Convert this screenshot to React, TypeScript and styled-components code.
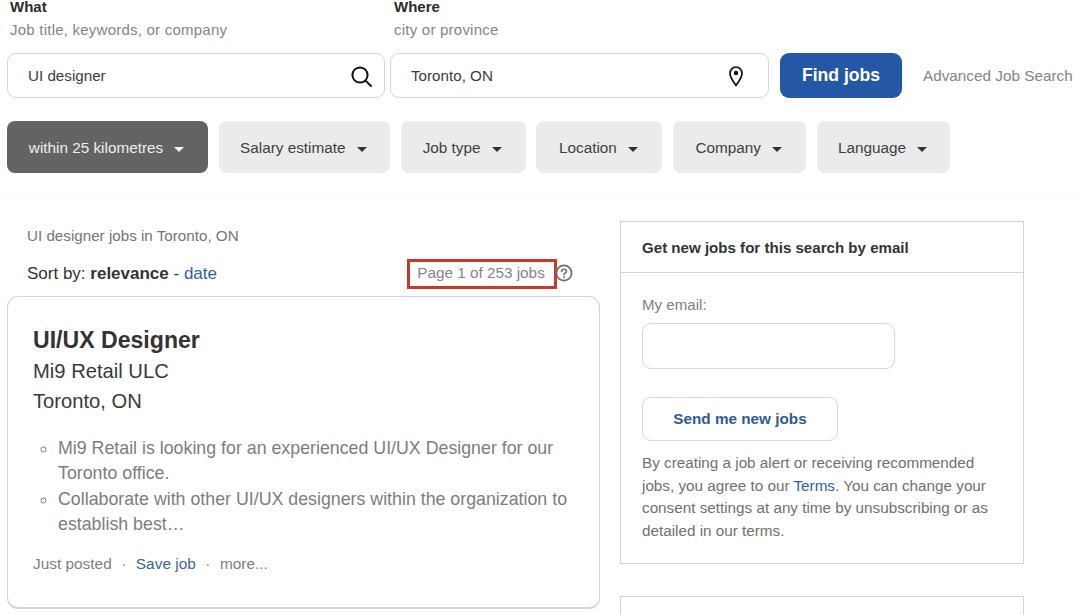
import React from "react";
import styled, { createGlobalStyle } from "styled-components";

const Global = createGlobalStyle`
  html, body { margin: 0; padding: 0; background: #fff; height: 615px; overflow: hidden; }
  body { font-family: "Liberation Sans", Arial, sans-serif; color: #2d2d2d; }
  * { box-sizing: border-box; }
`;

const Page = styled.div`
  width: 1080px;
  height: 615px;
  overflow: hidden;
  display: flex;
  flex-direction: column;
`;

const SearchForm = styled.div`
  display: grid;
  grid-template-columns: 378px 379px 122px auto;
  column-gap: 5px;
  padding-left: 7px;
  height: 98px;
  grid-template-rows: 53px 45px;
`;

const FieldHead = styled.div<{ $shift?: number }>`
  padding-left: ${(p) => 3 + (p.$shift ?? 0)}px;
`;

const FieldTitle = styled.div`
  font-size: 15px;
  font-weight: 700;
  line-height: 14px;
  color: #2b2b2b;
`;

const FieldHint = styled.div`
  font-size: 15px;
  line-height: 18px;
  margin-top: 7px;
  color: #858585;
  letter-spacing: 0.23px;
`;

const Field = styled.div`
  border: 1px solid #d6d6d8;
  border-radius: 9px;
  background: #fff;
  display: flex;
  align-items: center;
  justify-content: space-between;
  padding: 0 11px 0 20px;
  font-size: 15.2px;
  color: #3c3c3c;
`;

const FindButton = styled.div`
  margin-left: 6px;
  width: 122px;
  background: #2458a6;
  border-radius: 9px;
  color: #fff;
  font-weight: 700;
  font-size: 17.6px;
  display: flex;
  align-items: center;
  justify-content: center;
`;

const Advanced = styled.div`
  margin-left: 22px;
  font-size: 15.3px;
  color: #858585;
  display: flex;
  align-items: center;
  white-space: nowrap;
`;

const FilterRow = styled.div`
  display: flex;
  gap: 10.8px;
  margin-top: 23px;
  padding: 0 0 22px 7px;
  border-bottom: 1px solid #f8f8f8;
`;

const Filter = styled.div<{ $active?: boolean; $w: number }>`
  width: ${(p) => p.$w}px;
  height: 52px;
  padding: 1px 2px 0 0;
  border-radius: 8px;
  display: flex;
  align-items: center;
  justify-content: center;
  gap: 11px;
  font-size: 15.3px;
  background: ${(p) => (p.$active ? "#636363" : "#ebebeb")};
  color: ${(p) => (p.$active ? "#efefef" : "#404040")};
`;

const Caret = styled.span<{ $light?: boolean }>`
  width: 0;
  height: 0;
  margin-top: 3px;
  border-left: 5px solid transparent;
  border-right: 5px solid transparent;
  border-top: 5px solid ${(p) => (p.$light ? "#f4f4f4" : "#333")};
`;

const Columns = styled.div`
  display: flex;
  align-items: flex-start;
  padding-left: 7px;
`;

const Left = styled.div`
  width: 593px;
  padding-top: 31px;
`;

const ResultsTitle = styled.div`
  padding-left: 20px;
  font-size: 15.2px;
  line-height: 18px;
  color: #757575;
`;

const SortRow = styled.div`
  height: 24px;
  margin-top: 17px;
  padding-left: 20px;
  font-size: 17px;
  line-height: 24px;
  color: #333;
  display: flex;
  justify-content: space-between;
`;

const SortLink = styled.span`
  color: #2e5f9e;
`;

const PageCount = styled.div`
  display: flex;
  align-items: center;
  margin-right: 27px;
  margin-top: -1px;
`;

const PageBox = styled.div`
  width: 150px;
  height: 30px;
  padding: 0 2px 1px 0;
  border: 3px solid #c53a2c;
  display: flex;
  align-items: center;
  justify-content: center;
  font-size: 15.3px;
  color: #858585;
`;

const HelpIcon = styled.svg`
  margin-left: -2px;
  margin-top: -1px;
`;

const Card = styled.div`
  margin-top: 10px;
  height: 313px;
  border: 1px solid #d4d4d4;
  border-bottom-width: 2px;
  border-radius: 11px;
  padding: 28px 26px 0 25px;
`;

const JobTitle = styled.div`
  font-size: 23.1px;
  line-height: 31px;
  font-weight: 700;
  color: #333;
`;

const JobLine = styled.div`
  font-size: 20.2px;
  line-height: 30px;
  color: #3a3a3a;
`;

const Snippet = styled.ul`
  margin: 20px 0 0;
  padding: 0 0 0 25px;
  font-size: 17.8px;
  line-height: 25.4px;
  color: #7d7d7d;
  list-style: circle;
`;

const Meta = styled.div`
  margin-top: 14px;
  display: flex;
  gap: 9.5px;
  font-size: 15.4px;
  line-height: 24px;
  color: #808080;
`;

const MetaLink = styled.span`
  color: #3f6594;
`;

const Right = styled.div`
  margin-left: 20px;
  width: 404px;
  padding-top: 25px;
`;

const AlertBox = styled.div`
  border: 1px solid #d4d4d4;
  height: 343px;
`;

const AlertHead = styled.div`
  height: 51px;
  border-bottom: 1px solid #d4d4d4;
  display: flex;
  align-items: center;
  padding-left: 21px;
  font-size: 15.1px;
  font-weight: 700;
  color: #333;
`;

const AlertBody = styled.div`
  padding: 23px 21px 0;
`;

const EmailLabel = styled.div`
  font-size: 15.1px;
  line-height: 18px;
  color: #808080;
`;

const EmailInput = styled.div`
  width: 253px;
  height: 46px;
  margin-top: 9px;
  border: 1px solid #d6d6d8;
  border-radius: 9px;
`;

const SendButton = styled.div`
  width: 196px;
  height: 44px;
  margin-top: 28px;
  border: 1px solid #d6d6d8;
  border-radius: 9px;
  display: flex;
  align-items: center;
  justify-content: center;
  font-size: 15.3px;
  font-weight: 700;
  color: #2f5b94;
`;

const Legal = styled.div`
  margin-top: 11px;
  font-size: 15.25px;
  line-height: 22.6px;
  color: #707070;
  width: 360px;
`;

const TermsLink = styled.span`
  color: #2e5f9e;
`;

const NextBox = styled.div`
  margin-top: 32px;
  height: 60px;
  border: 1px solid #d4d4d4;
`;

const PinIcon = styled.svg`
  margin-right: 11px;
`;

const filters = [
  { label: "Salary estimate", w: 171 },
  { label: "Job type", w: 125 },
  { label: "Location", w: 126 },
  { label: "Company", w: 133 },
  { label: "Language", w: 133 },
];

export default function App() {
  return (
    <Page>
      <Global />
      <SearchForm>
        <FieldHead>
          <FieldTitle>What</FieldTitle>
          <FieldHint>Job title, keywords, or company</FieldHint>
        </FieldHead>
        <FieldHead $shift={1}>
          <FieldTitle>Where</FieldTitle>
          <FieldHint>city or province</FieldHint>
        </FieldHead>
        <div />
        <div />
        <Field>
          UI designer
          <svg width="24" height="24" viewBox="0 0 24 24" fill="none" stroke="#111" strokeWidth="2">
            <circle cx="11" cy="11" r="7.6" />
            <path d="M16.6 16.6 L22 22" strokeLinecap="round" />
          </svg>
        </Field>
        <Field>
          Toronto, ON
          <PinIcon width="20" height="22" viewBox="0 0 20 22" fill="none">
            <path
              d="M10 20.5 C7 16 4 12.5 4 8.5 A6 6.5 0 0 1 16 8.5 C16 12.5 13 16 10 20.5 Z"
              stroke="#111"
              strokeWidth="1.7"
              strokeLinejoin="round"
            />
            <circle cx="10" cy="8" r="2.2" fill="#111" />
          </PinIcon>
        </Field>
        <FindButton>Find jobs</FindButton>
        <Advanced>Advanced Job Search</Advanced>
      </SearchForm>

      <FilterRow>
        <Filter $active $w={201}>
          within 25 kilometres
          <Caret $light />
        </Filter>
        {filters.map((f) => (
          <Filter key={f.label} $w={f.w}>
            {f.label}
            <Caret />
          </Filter>
        ))}
      </FilterRow>

      <Columns>
        <Left>
          <ResultsTitle>UI designer jobs in Toronto, ON</ResultsTitle>
          <SortRow>
            <span>
              Sort by: <b>relevance</b> - <SortLink>date</SortLink>
            </span>
            <PageCount>
              <PageBox>Page 1 of 253 jobs</PageBox>
              <HelpIcon width="18" height="18" viewBox="0 0 18 18" fill="none">
                <circle cx="9" cy="9" r="7.6" stroke="#707070" strokeWidth="1.8" />
                <path
                  d="M6.6 7.2 C6.6 4.6 11.4 4.6 11.4 7.2 C11.4 8.9 9 8.9 9 10.8"
                  stroke="#707070"
                  strokeWidth="1.7"
                  strokeLinecap="round"
                />
                <circle cx="9" cy="13.2" r="1" fill="#707070" />
              </HelpIcon>
            </PageCount>
          </SortRow>
          <Card>
            <JobTitle>UI/UX Designer</JobTitle>
            <JobLine>Mi9 Retail ULC</JobLine>
            <JobLine>Toronto, ON</JobLine>
            <Snippet>
              <li>Mi9 Retail is looking for an experienced UI/UX Designer for our Toronto office.</li>
              <li>Collaborate with other UI/UX designers within the organization to establish best…</li>
            </Snippet>
            <Meta>
              <span>Just posted</span>
              <span>·</span>
              <MetaLink>Save job</MetaLink>
              <span>·</span>
              <span>more...</span>
            </Meta>
          </Card>
        </Left>
        <Right>
          <AlertBox>
            <AlertHead>Get new jobs for this search by email</AlertHead>
            <AlertBody>
              <EmailLabel>My email:</EmailLabel>
              <EmailInput />
              <SendButton>Send me new jobs</SendButton>
              <Legal>
                By creating a job alert or receiving recommended jobs, you agree to our{" "}
                <TermsLink>Terms</TermsLink>. You can change your consent settings at any time by
                unsubscribing or as detailed in our terms.
              </Legal>
            </AlertBody>
          </AlertBox>
          <NextBox />
        </Right>
      </Columns>
    </Page>
  );
}
